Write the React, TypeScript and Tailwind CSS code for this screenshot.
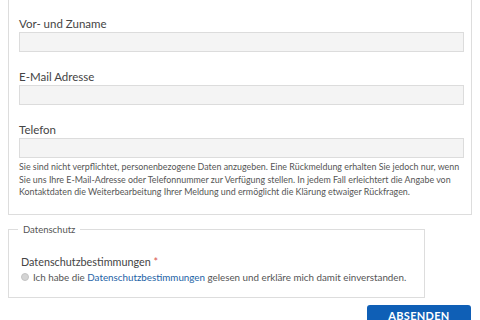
import React from "react";

const FELDER = ["Vor- und Zuname", "E-Mail Adresse", "Telefon"];

function Feld({ label }: { label: string }) {
  return (
    <div className="flex flex-col">
      <label className="text-[11.5px] leading-[14px] text-[#444] mb-[1px]">{label}</label>
      <div className="h-[20px] bg-[#f4f4f4] border border-[#dcdcdc]" />
    </div>
  );
}

export default function App() {
  return (
    <div className="w-[480px] h-[320px] overflow-hidden bg-white font-['Lato','Open_Sans',sans-serif]">
      {/* Kontaktdaten */}
      <div className="ml-[8px] w-[464px] border-x border-b border-[#dddddd] pt-[17px] pl-[10px] pr-[7px] pb-[15px]">
        <div className="flex flex-col gap-[18px]">
          {FELDER.map((f) => (
            <Feld key={f} label={f} />
          ))}
        </div>
        <p className="mt-[3px] text-[8.9px] leading-[12.5px] text-[#555]">
          Sie sind nicht verpflichtet, personenbezogene Daten anzugeben. Eine Rückmeldung erhalten Sie jedoch nur, wenn
          Sie uns Ihre E-Mail-Adresse oder Telefonnummer zur Verfügung stellen. In jedem Fall erleichtert die Angabe von
          Kontaktdaten die Weiterbearbeitung Ihrer Meldung und ermöglicht die Klärung etwaiger Rückfragen.
        </p>
      </div>

      {/* Datenschutz */}
      <fieldset className="ml-[8px] mt-[9px] w-[417px] border border-[#dddddd] pl-[12px] pr-[8px] pb-[13px]">
        <legend className="-ml-[3px] px-[5px] text-[9.5px] leading-[12px] text-[#555]">Datenschutz</legend>
        <div className="mt-[18px] text-[10.8px] leading-[15px] text-[#444]">
          Datenschutzbestimmungen <span className="text-[#d9534f]">*</span>
        </div>
        <div className="mt-[2px] flex items-center gap-[4px] text-[9.8px] leading-[13px] text-[#555]">
          <span className="w-[8px] h-[8px] rounded-full bg-[#d4d4d4] border border-[#c4c4c4]" />
          <span>
            Ich habe die <span className="text-[#1d63a6]">Datenschutzbestimmungen</span> gelesen und erkläre mich damit
            einverstanden.
          </span>
        </div>
      </fieldset>

      <div className="flex justify-end w-[471px] mt-[7px]">
        <button className="w-[104px] h-[24px] rounded-t-[3px] bg-[#0f5fb6] text-white text-[11px] font-bold tracking-[0.3px]">
          ABSENDEN
        </button>
      </div>
    </div>
  );
}
